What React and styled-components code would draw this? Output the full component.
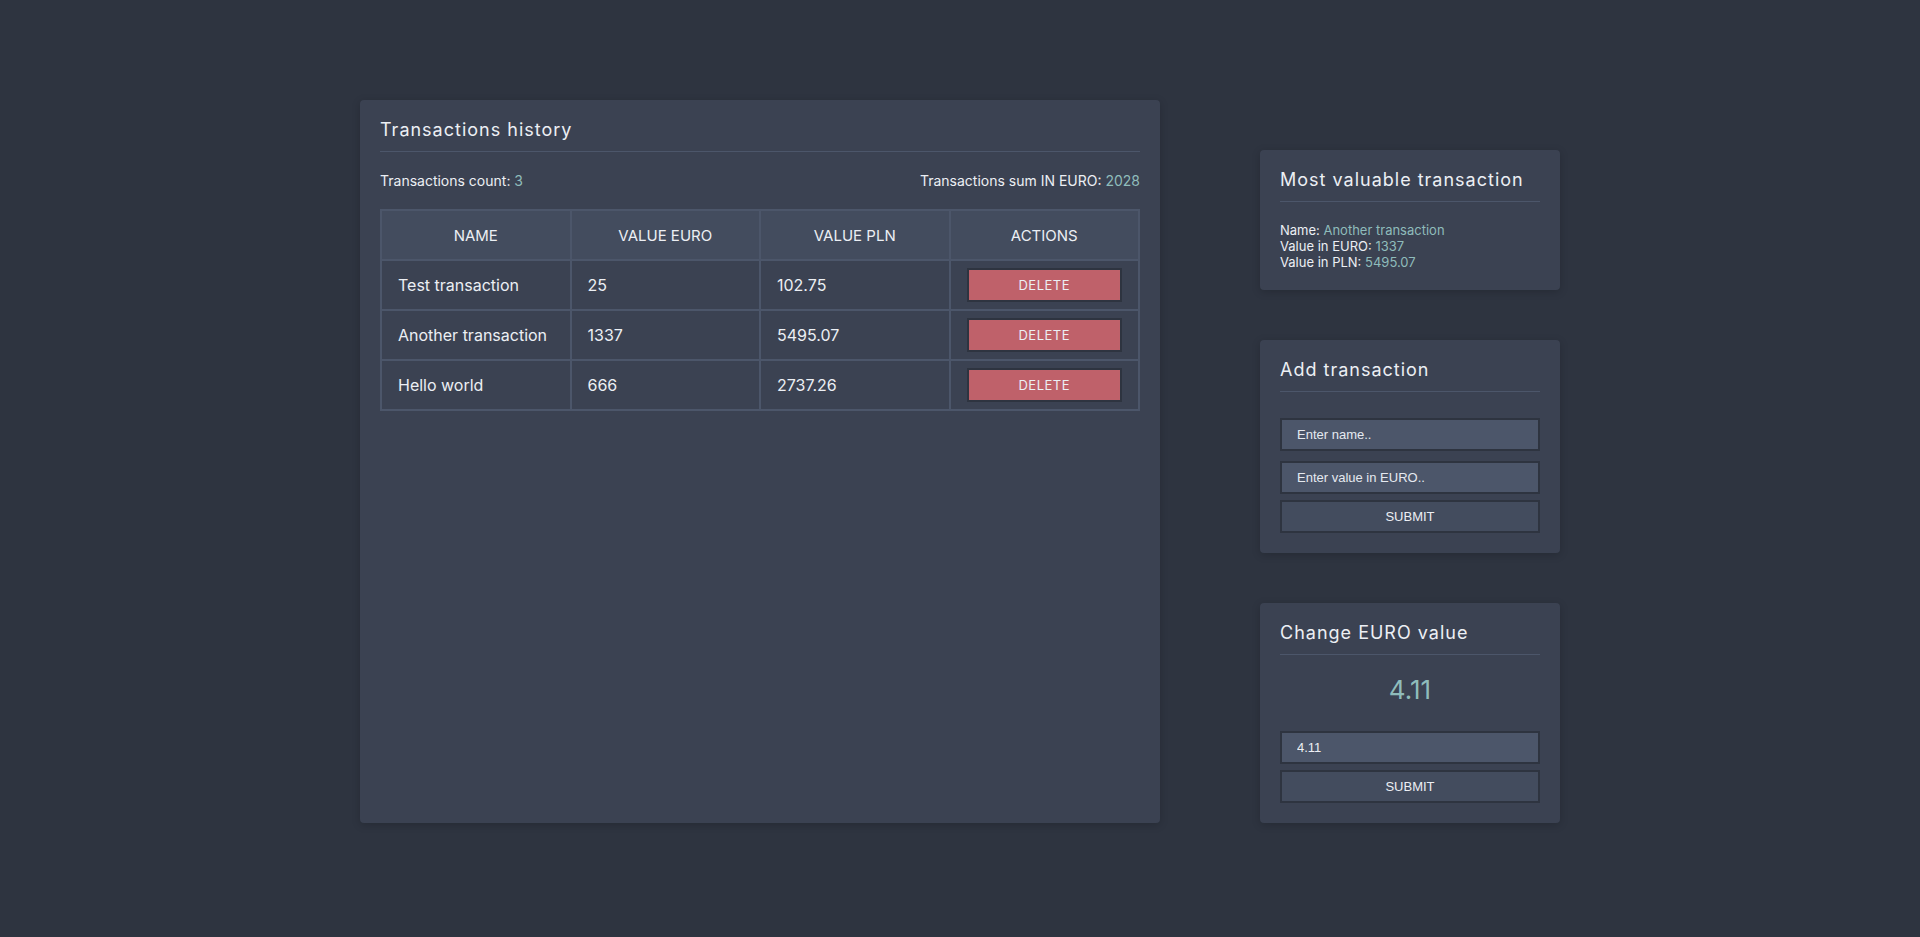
import React, { useState } from "react";
import styled, { createGlobalStyle } from "styled-components";

const GlobalStyle = createGlobalStyle`
  html, body {
    margin: 0;
    padding: 0;
    background: #2e3440;
    color: #eceff4;
    font-family: Inter, "Noto Sans", sans-serif;
  }
  * { box-sizing: border-box; }
`;

const Page = styled.div`
  padding: 100px 0;
  display: flex;
  justify-content: center;
  align-items: stretch;
  gap: 100px;
`;

const Panel = styled.div`
  background: #3b4252;
  border-radius: 4px;
  padding: 20px;
  box-shadow: 0 2px 8px rgba(0, 0, 0, 0.18);
`;

const MainPanel = styled(Panel)`
  width: 800px;
`;

const SideColumn = styled.div`
  width: 300px;
  padding-top: 50px;
  display: flex;
  flex-direction: column;
  gap: 50px;
`;

const Title = styled.h2`
  margin: 0;
  padding-bottom: 11px;
  font-size: 18px;
  font-weight: 400;
  letter-spacing: 1px;
  line-height: 20px;
  white-space: nowrap;
  border-bottom: 1px solid #4c566a;
`;

const StatsRow = styled.div`
  display: flex;
  justify-content: space-between;
  margin-top: 20px;
  font-size: 14px;
  line-height: 17px;
`;

const Accent = styled.span`
  color: #8fbcbb;
`;

const Table = styled.table`
  width: 100%;
  margin-top: 20px;
  border-collapse: collapse;
  border: 2px solid #4c566a;
  table-layout: fixed;
`;

const HeadCell = styled.th`
  height: 50px;
  background: #434c5e;
  border: 2px solid #4c566a;
  font-weight: 400;
  font-size: 15px;
  text-align: center;
`;

const Cell = styled.td`
  height: 50px;
  padding: 0 16px;
  border: 2px solid #4c566a;
  font-size: 16px;
  text-align: ${(p) => (p.$center ? "center" : "left")};
`;

const DeleteButton = styled.button`
  width: 100%;
  height: 34px;
  background: #bf616a;
  border: 2px solid #2e3440;
  color: #eceff4;
  font-family: Inter, sans-serif;
  font-size: 13px;
  letter-spacing: 0.5px;
  cursor: pointer;
`;

const InfoList = styled.div`
  margin-top: 20px;
  font-size: 13px;
  line-height: 16px;
`;

const Form = styled.div`
  display: flex;
  flex-direction: column;
  margin-top: ${(p) => p.$top}px;
`;

const Input = styled.input`
  height: 33px;
  margin-bottom: ${(p) => p.$gap}px;
  padding: 0 15px;
  background: #4c566a;
  border: 2px solid #2e3440;
  color: #eceff4;
  font-family: "Liberation Sans", Arial, sans-serif;
  font-size: 13px;
  outline: none;
  &::placeholder {
    color: #e5e9f0;
  }
`;

const SubmitButton = styled.button`
  height: 33px;
  background: #434c5e;
  border: 2px solid #2e3440;
  color: #eceff4;
  font-family: "Liberation Sans", Arial, sans-serif;
  font-size: 13px;
  cursor: pointer;
`;

const RateValue = styled.div`
  margin-top: 19px;
  text-align: center;
  font-size: 26px;
  line-height: 32px;
  color: #8fbcbb;
`;

const transactions = [
  { name: "Test transaction", euro: 25 },
  { name: "Another transaction", euro: 1337 },
  { name: "Hello world", euro: 666 },
];

export default function App() {
  const [rate] = useState(4.11);
  const sum = transactions.reduce((a, t) => a + t.euro, 0);
  const top = transactions.reduce((a, t) => (t.euro > a.euro ? t : a));

  return (
    <>
      <GlobalStyle />
      <Page>
        <MainPanel>
          <Title>Transactions history</Title>
          <StatsRow>
            <span>
              Transactions count: <Accent>{transactions.length}</Accent>
            </span>
            <span>
              Transactions sum IN EURO: <Accent>{sum}</Accent>
            </span>
          </StatsRow>
          <Table>
            <thead>
              <tr>
                <HeadCell>NAME</HeadCell>
                <HeadCell>VALUE EURO</HeadCell>
                <HeadCell>VALUE PLN</HeadCell>
                <HeadCell>ACTIONS</HeadCell>
              </tr>
            </thead>
            <tbody>
              {transactions.map((t) => (
                <tr key={t.name}>
                  <Cell>{t.name}</Cell>
                  <Cell>{t.euro}</Cell>
                  <Cell>{Math.round(t.euro * rate * 100) / 100}</Cell>
                  <Cell $center>
                    <DeleteButton>DELETE</DeleteButton>
                  </Cell>
                </tr>
              ))}
            </tbody>
          </Table>
        </MainPanel>

        <SideColumn>
          <Panel>
            <Title>Most valuable transaction</Title>
            <InfoList>
              <div>
                Name: <Accent>{top.name}</Accent>
              </div>
              <div>
                Value in EURO: <Accent>{top.euro}</Accent>
              </div>
              <div>
                Value in PLN: <Accent>{(top.euro * rate).toFixed(2)}</Accent>
              </div>
            </InfoList>
          </Panel>

          <Panel>
            <Title>Add transaction</Title>
            <Form $top={26}>
              <Input $gap={10} placeholder="Enter name.." />
              <Input $gap={6} placeholder="Enter value in EURO.." />
              <SubmitButton>SUBMIT</SubmitButton>
            </Form>
          </Panel>

          <Panel>
            <Title>Change EURO value</Title>
            <RateValue>{rate}</RateValue>
            <Form $top={25}>
              <Input $gap={6} defaultValue={rate} />
              <SubmitButton>SUBMIT</SubmitButton>
            </Form>
          </Panel>
        </SideColumn>
      </Page>
    </>
  );
}
